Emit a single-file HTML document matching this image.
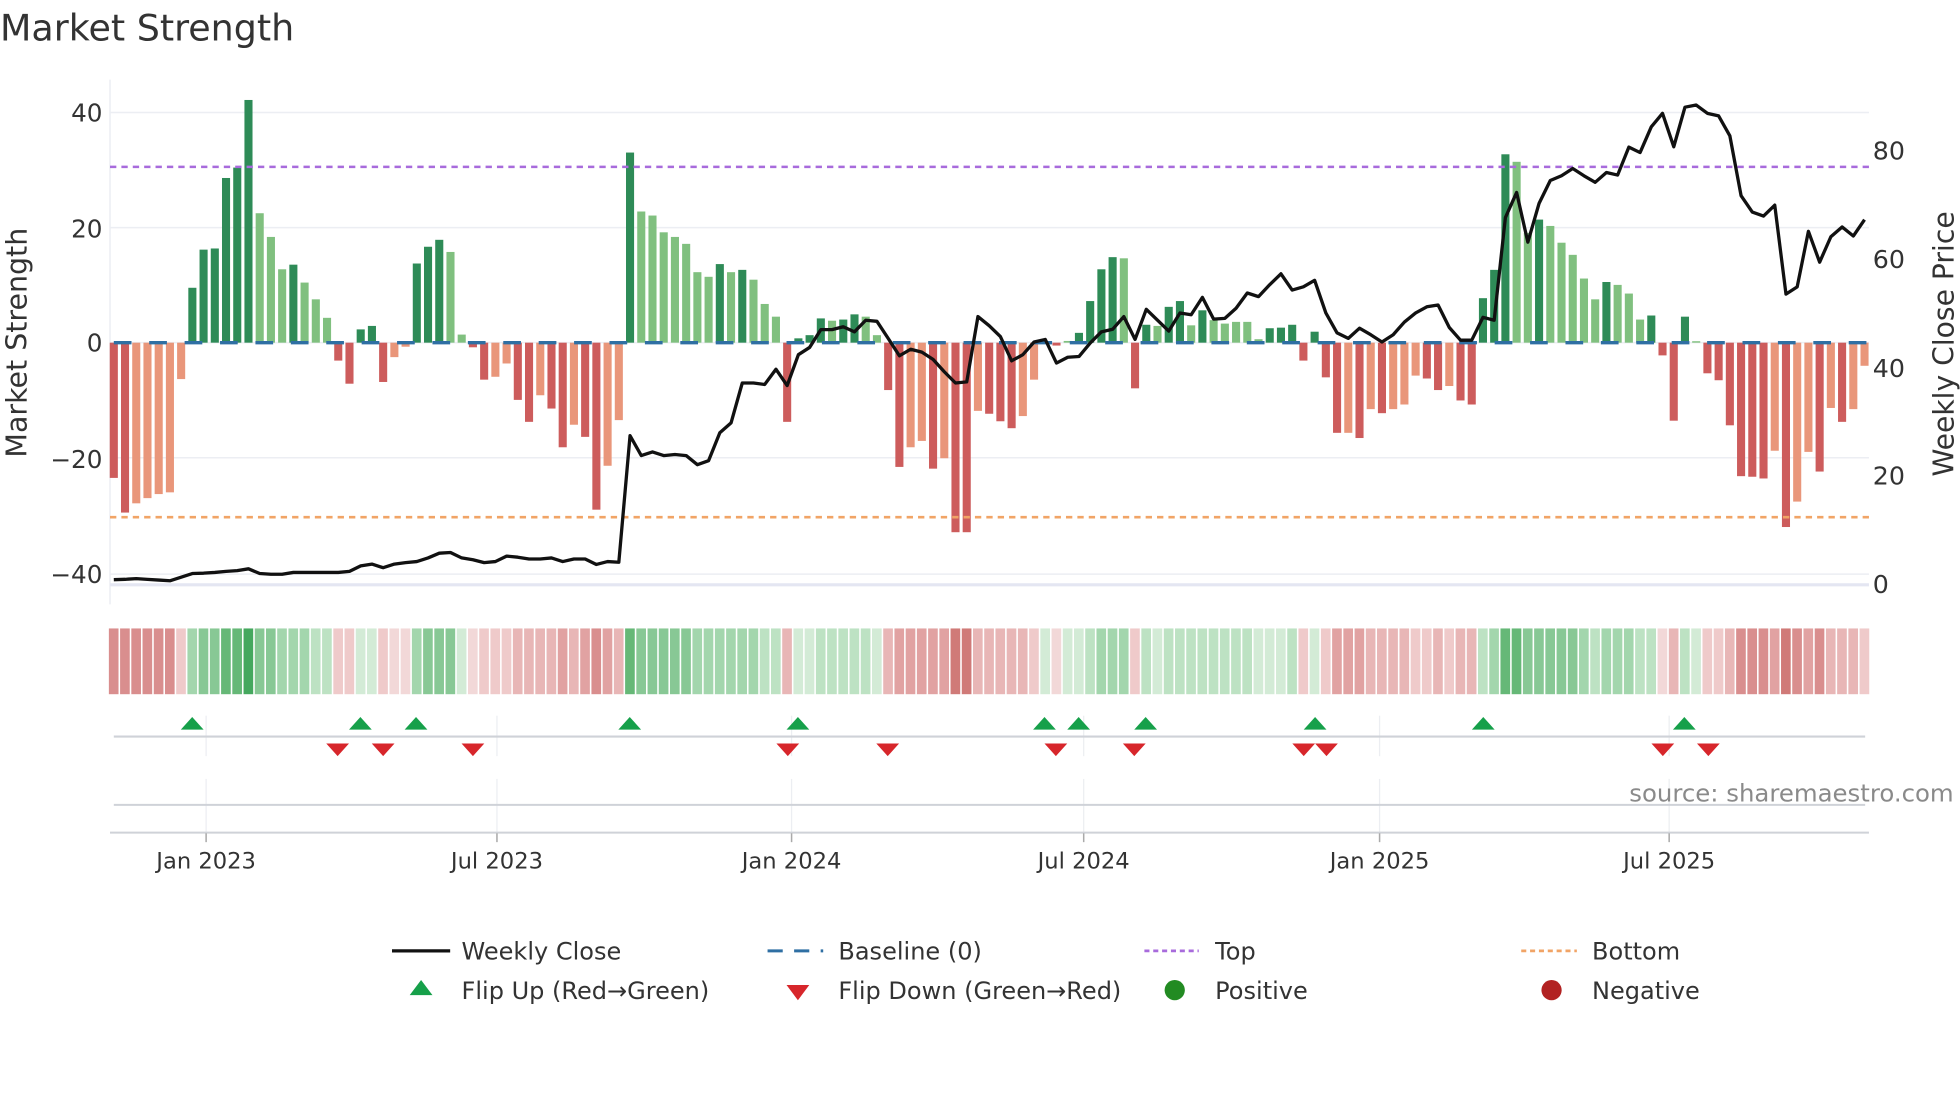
<!DOCTYPE html>
<html><head><meta charset="utf-8"><style>
html,body{margin:0;padding:0;background:#fff;}
svg{display:block;font-family:"DejaVu Sans","Liberation Sans",sans-serif;}
.G{fill:#2e8b57}.g{fill:#80c07f}.D{fill:#cd5c5c}.L{fill:#e9967a}
.g1{fill:#d3ebd6}.g2{fill:#bde2c3}.g3{fill:#a3d6ad}.g4{fill:#88c895}.g5{fill:#66b877}.g6{fill:#45a85e}
.r1{fill:#f2d8d8}.r2{fill:#efcaca}.r3{fill:#e8b6b6}.r4{fill:#e1a2a2}.r5{fill:#d98e8e}.r6{fill:#d07a78}
</style></head><body>
<svg width="1960" height="1102" viewBox="0 0 1550 871.5" preserveAspectRatio="none" xmlns="http://www.w3.org/2000/svg">
<text x="0" y="32" font-size="28.8" fill="#333">Market Strength</text>
<g stroke="#eceef3" stroke-width="1.2">
<line x1="87" y1="89" x2="1478" y2="89"/><line x1="87" y1="180" x2="1478" y2="180"/><line x1="87" y1="271" x2="1478" y2="271"/><line x1="87" y1="362" x2="1478" y2="362"/><line x1="87" y1="454" x2="1478" y2="454"/>
<line x1="87" y1="63" x2="87" y2="478"/>
</g>
<line x1="87" y1="462.5" x2="1478" y2="462.5" stroke="#e4e6f2" stroke-width="2.5"/>
<g transform="translate(90,271) scale(8.875,-4.57)">
<rect class="D" x="-0.36" y="-23.4" width="0.72" height="23.4"/>
<rect class="D" x="0.64" y="-29.4" width="0.72" height="29.4"/>
<rect class="L" x="1.64" y="-27.8" width="0.72" height="27.8"/>
<rect class="L" x="2.64" y="-26.9" width="0.72" height="26.9"/>
<rect class="L" x="3.64" y="-26.2" width="0.72" height="26.2"/>
<rect class="L" x="4.64" y="-25.9" width="0.72" height="25.9"/>
<rect class="L" x="5.64" y="-6.3" width="0.72" height="6.3"/>
<rect class="G" x="6.64" y="0" width="0.72" height="9.5"/>
<rect class="G" x="7.64" y="0" width="0.72" height="16.1"/>
<rect class="G" x="8.64" y="0" width="0.72" height="16.3"/>
<rect class="G" x="9.64" y="0" width="0.72" height="28.5"/>
<rect class="G" x="10.64" y="0" width="0.72" height="30.3"/>
<rect class="G" x="11.64" y="0" width="0.72" height="42"/>
<rect class="g" x="12.64" y="0" width="0.72" height="22.4"/>
<rect class="g" x="13.64" y="0" width="0.72" height="18.3"/>
<rect class="g" x="14.64" y="0" width="0.72" height="12.7"/>
<rect class="G" x="15.64" y="0" width="0.72" height="13.5"/>
<rect class="g" x="16.64" y="0" width="0.72" height="10.4"/>
<rect class="g" x="17.64" y="0" width="0.72" height="7.5"/>
<rect class="g" x="18.64" y="0" width="0.72" height="4.3"/>
<rect class="D" x="19.64" y="-3.1" width="0.72" height="3.1"/>
<rect class="D" x="20.64" y="-7.1" width="0.72" height="7.1"/>
<rect class="G" x="21.64" y="0" width="0.72" height="2.3"/>
<rect class="G" x="22.64" y="0" width="0.72" height="2.9"/>
<rect class="D" x="23.64" y="-6.8" width="0.72" height="6.8"/>
<rect class="L" x="24.64" y="-2.5" width="0.72" height="2.5"/>
<rect class="L" x="25.64" y="-0.7" width="0.72" height="0.7"/>
<rect class="G" x="26.64" y="0" width="0.72" height="13.7"/>
<rect class="G" x="27.64" y="0" width="0.72" height="16.6"/>
<rect class="G" x="28.64" y="0" width="0.72" height="17.8"/>
<rect class="g" x="29.64" y="0" width="0.72" height="15.7"/>
<rect class="g" x="30.64" y="0" width="0.72" height="1.4"/>
<rect class="D" x="31.64" y="-0.8" width="0.72" height="0.8"/>
<rect class="D" x="32.64" y="-6.4" width="0.72" height="6.4"/>
<rect class="L" x="33.64" y="-5.9" width="0.72" height="5.9"/>
<rect class="L" x="34.64" y="-3.6" width="0.72" height="3.6"/>
<rect class="D" x="35.64" y="-9.9" width="0.72" height="9.9"/>
<rect class="D" x="36.64" y="-13.7" width="0.72" height="13.7"/>
<rect class="L" x="37.64" y="-9.1" width="0.72" height="9.1"/>
<rect class="D" x="38.64" y="-11.4" width="0.72" height="11.4"/>
<rect class="D" x="39.64" y="-18.1" width="0.72" height="18.1"/>
<rect class="L" x="40.64" y="-14.2" width="0.72" height="14.2"/>
<rect class="D" x="41.64" y="-16.3" width="0.72" height="16.3"/>
<rect class="D" x="42.64" y="-28.9" width="0.72" height="28.9"/>
<rect class="L" x="43.64" y="-21.3" width="0.72" height="21.3"/>
<rect class="L" x="44.64" y="-13.4" width="0.72" height="13.4"/>
<rect class="G" x="45.64" y="0" width="0.72" height="32.9"/>
<rect class="g" x="46.64" y="0" width="0.72" height="22.7"/>
<rect class="g" x="47.64" y="0" width="0.72" height="22"/>
<rect class="g" x="48.64" y="0" width="0.72" height="19.1"/>
<rect class="g" x="49.64" y="0" width="0.72" height="18.3"/>
<rect class="g" x="50.64" y="0" width="0.72" height="17.1"/>
<rect class="g" x="51.64" y="0" width="0.72" height="12.2"/>
<rect class="g" x="52.64" y="0" width="0.72" height="11.4"/>
<rect class="G" x="53.64" y="0" width="0.72" height="13.6"/>
<rect class="g" x="54.64" y="0" width="0.72" height="12.2"/>
<rect class="G" x="55.64" y="0" width="0.72" height="12.6"/>
<rect class="g" x="56.64" y="0" width="0.72" height="10.9"/>
<rect class="g" x="57.64" y="0" width="0.72" height="6.7"/>
<rect class="g" x="58.64" y="0" width="0.72" height="4.5"/>
<rect class="D" x="59.64" y="-13.7" width="0.72" height="13.7"/>
<rect class="G" x="60.64" y="0" width="0.72" height="0.75"/>
<rect class="G" x="61.64" y="0" width="0.72" height="1.3"/>
<rect class="G" x="62.64" y="0" width="0.72" height="4.2"/>
<rect class="g" x="63.64" y="0" width="0.72" height="3.8"/>
<rect class="G" x="64.64" y="0" width="0.72" height="4.0"/>
<rect class="G" x="65.64" y="0" width="0.72" height="4.9"/>
<rect class="g" x="66.64" y="0" width="0.72" height="4.5"/>
<rect class="g" x="67.64" y="0" width="0.72" height="1.3"/>
<rect class="D" x="68.64" y="-8.2" width="0.72" height="8.2"/>
<rect class="D" x="69.64" y="-21.5" width="0.72" height="21.5"/>
<rect class="L" x="70.64" y="-18.1" width="0.72" height="18.1"/>
<rect class="L" x="71.64" y="-17" width="0.72" height="17"/>
<rect class="D" x="72.64" y="-21.8" width="0.72" height="21.8"/>
<rect class="L" x="73.64" y="-20" width="0.72" height="20"/>
<rect class="D" x="74.64" y="-32.8" width="0.72" height="32.8"/>
<rect class="D" x="75.64" y="-32.8" width="0.72" height="32.8"/>
<rect class="L" x="76.64" y="-11.8" width="0.72" height="11.8"/>
<rect class="D" x="77.64" y="-12.3" width="0.72" height="12.3"/>
<rect class="D" x="78.64" y="-13.6" width="0.72" height="13.6"/>
<rect class="D" x="79.64" y="-14.8" width="0.72" height="14.8"/>
<rect class="L" x="80.64" y="-12.7" width="0.72" height="12.7"/>
<rect class="L" x="81.64" y="-6.4" width="0.72" height="6.4"/>
<rect class="g" x="82.64" y="0" width="0.72" height="0.2"/>
<rect class="D" x="83.64" y="-0.5" width="0.72" height="0.5"/>
<rect class="g" x="84.64" y="0" width="0.72" height="0.3"/>
<rect class="G" x="85.64" y="0" width="0.72" height="1.7"/>
<rect class="G" x="86.64" y="0" width="0.72" height="7.2"/>
<rect class="G" x="87.64" y="0" width="0.72" height="12.7"/>
<rect class="G" x="88.64" y="0" width="0.72" height="14.8"/>
<rect class="g" x="89.64" y="0" width="0.72" height="14.6"/>
<rect class="D" x="90.64" y="-7.9" width="0.72" height="7.9"/>
<rect class="G" x="91.64" y="0" width="0.72" height="3.1"/>
<rect class="g" x="92.64" y="0" width="0.72" height="2.9"/>
<rect class="G" x="93.64" y="0" width="0.72" height="6.2"/>
<rect class="G" x="94.64" y="0" width="0.72" height="7.2"/>
<rect class="g" x="95.64" y="0" width="0.72" height="3.0"/>
<rect class="G" x="96.64" y="0" width="0.72" height="5.6"/>
<rect class="g" x="97.64" y="0" width="0.72" height="3.9"/>
<rect class="g" x="98.64" y="0" width="0.72" height="3.3"/>
<rect class="g" x="99.64" y="0" width="0.72" height="3.6"/>
<rect class="g" x="100.64" y="0" width="0.72" height="3.6"/>
<rect class="g" x="101.64" y="0" width="0.72" height="0.6"/>
<rect class="G" x="102.64" y="0" width="0.72" height="2.5"/>
<rect class="G" x="103.64" y="0" width="0.72" height="2.6"/>
<rect class="G" x="104.64" y="0" width="0.72" height="3.1"/>
<rect class="D" x="105.64" y="-3.1" width="0.72" height="3.1"/>
<rect class="G" x="106.64" y="0" width="0.72" height="1.9"/>
<rect class="D" x="107.64" y="-6.0" width="0.72" height="6.0"/>
<rect class="D" x="108.64" y="-15.6" width="0.72" height="15.6"/>
<rect class="L" x="109.64" y="-15.6" width="0.72" height="15.6"/>
<rect class="D" x="110.64" y="-16.5" width="0.72" height="16.5"/>
<rect class="L" x="111.64" y="-11.5" width="0.72" height="11.5"/>
<rect class="D" x="112.64" y="-12.2" width="0.72" height="12.2"/>
<rect class="L" x="113.64" y="-11.5" width="0.72" height="11.5"/>
<rect class="L" x="114.64" y="-10.7" width="0.72" height="10.7"/>
<rect class="L" x="115.64" y="-5.7" width="0.72" height="5.7"/>
<rect class="D" x="116.64" y="-6.2" width="0.72" height="6.2"/>
<rect class="D" x="117.64" y="-8.2" width="0.72" height="8.2"/>
<rect class="L" x="118.64" y="-7.5" width="0.72" height="7.5"/>
<rect class="D" x="119.64" y="-10.0" width="0.72" height="10.0"/>
<rect class="D" x="120.64" y="-10.7" width="0.72" height="10.7"/>
<rect class="G" x="121.64" y="0" width="0.72" height="7.7"/>
<rect class="G" x="122.64" y="0" width="0.72" height="12.6"/>
<rect class="G" x="123.64" y="0" width="0.72" height="32.6"/>
<rect class="g" x="124.64" y="0" width="0.72" height="31.3"/>
<rect class="g" x="125.64" y="0" width="0.72" height="19"/>
<rect class="G" x="126.64" y="0" width="0.72" height="21.3"/>
<rect class="g" x="127.64" y="0" width="0.72" height="20.2"/>
<rect class="g" x="128.64" y="0" width="0.72" height="17.3"/>
<rect class="g" x="129.64" y="0" width="0.72" height="15.2"/>
<rect class="g" x="130.64" y="0" width="0.72" height="11.1"/>
<rect class="g" x="131.64" y="0" width="0.72" height="7.5"/>
<rect class="G" x="132.64" y="0" width="0.72" height="10.5"/>
<rect class="g" x="133.64" y="0" width="0.72" height="10.0"/>
<rect class="g" x="134.64" y="0" width="0.72" height="8.5"/>
<rect class="g" x="135.64" y="0" width="0.72" height="4.0"/>
<rect class="G" x="136.64" y="0" width="0.72" height="4.7"/>
<rect class="D" x="137.64" y="-2.2" width="0.72" height="2.2"/>
<rect class="D" x="138.64" y="-13.5" width="0.72" height="13.5"/>
<rect class="G" x="139.64" y="0" width="0.72" height="4.5"/>
<rect class="g" x="140.64" y="0" width="0.72" height="0.25"/>
<rect class="D" x="141.64" y="-5.3" width="0.72" height="5.3"/>
<rect class="D" x="142.64" y="-6.5" width="0.72" height="6.5"/>
<rect class="D" x="143.64" y="-14.3" width="0.72" height="14.3"/>
<rect class="D" x="144.64" y="-23.1" width="0.72" height="23.1"/>
<rect class="D" x="145.64" y="-23.2" width="0.72" height="23.2"/>
<rect class="D" x="146.64" y="-23.5" width="0.72" height="23.5"/>
<rect class="L" x="147.64" y="-18.7" width="0.72" height="18.7"/>
<rect class="D" x="148.64" y="-31.9" width="0.72" height="31.9"/>
<rect class="L" x="149.64" y="-27.5" width="0.72" height="27.5"/>
<rect class="L" x="150.64" y="-18.9" width="0.72" height="18.9"/>
<rect class="D" x="151.64" y="-22.3" width="0.72" height="22.3"/>
<rect class="L" x="152.64" y="-11.3" width="0.72" height="11.3"/>
<rect class="D" x="153.64" y="-13.7" width="0.72" height="13.7"/>
<rect class="L" x="154.64" y="-11.5" width="0.72" height="11.5"/>
<rect class="L" x="155.64" y="-4.0" width="0.72" height="4.0"/>
</g>
<line x1="87" y1="271" x2="1478" y2="271" stroke="#2f6fa3" stroke-width="2.6" stroke-dasharray="14 14" stroke-dashoffset="-3"/>
<line x1="87" y1="132" x2="1478" y2="132" stroke="#a86bdc" stroke-width="2" stroke-dasharray="5 4"/>
<line x1="87" y1="409" x2="1478" y2="409" stroke="#f1a466" stroke-width="2" stroke-dasharray="5 4"/>
<g transform="translate(90,46.6) scale(8.875,0.287)">
<polyline fill="none" stroke="#111" stroke-width="3.3" stroke-linejoin="round" vector-effect="non-scaling-stroke" points="0,1435 1,1434 2,1432 3,1434 4,1436 5,1438 6,1428 7,1418 8,1417 9,1415 10,1412 11,1410 12,1405 13,1418 14,1420 15,1420 16,1415 17,1415 18,1415 19,1415 20,1415 21,1412 22,1397 23,1392 24,1402 25,1392 26,1388 27,1385 28,1375 29,1362 30,1360 31,1375 32,1380 33,1388 34,1385 35,1370 36,1373 37,1378 38,1378 39,1375 40,1385 41,1378 42,1378 43,1393 44,1385 45,1387 46,1038 47,1093 48,1083 49,1093 50,1090 51,1093 52,1118 53,1107 54,1030 55,1003 56,893 57,893 58,897 59,855 60,900 61,815 62,795 63,746 64,746 65,738 66,752 67,720 68,723 69,770 70,818 71,800 72,808 73,828 74,862 75,893 76,890 77,710 78,735 79,765 80,832 81,815 82,780 83,773 84,838 85,822 86,820 87,783 88,752 89,745 90,710 91,773 92,690 93,720 94,750 95,700 96,705 97,657 98,717 99,715 100,687 101,645 102,655 103,622 104,592 105,637 106,628 107,610 108,700 109,755 110,770 111,742 112,760 113,780 114,760 115,725 116,700 117,683 118,678 119,740 120,775 121,775 122,712 123,720 124,437 125,368 126,505 127,398 128,335 129,322 130,302 131,322 132,340 133,313 134,320 135,243 136,258 137,187 138,150 139,242 140,133 141,127 142,150 143,157 144,212 145,377 146,422 147,433 148,403 149,648 150,628 151,475 152,560 153,490 154,463 155,488 156,443"/>
</g>
<g font-size="19.5" fill="#333" text-anchor="end">
<text x="81" y="96">40</text><text x="81" y="188">20</text><text x="81" y="278">0</text><text x="81" y="370">−20</text><text x="81" y="461">−40</text>
</g>
<g font-size="20" fill="#333">
<text x="1481" y="126">80</text><text x="1481" y="212">60</text><text x="1481" y="298">40</text><text x="1481" y="383">20</text><text x="1481" y="469">0</text>
</g>
<text transform="translate(21,271) rotate(-90)" font-size="22.5" fill="#333" text-anchor="middle">Market Strength</text>
<text transform="translate(1545,272) rotate(-90)" font-size="22.3" fill="#333" text-anchor="middle">Weekly Close Price</text>
<g transform="translate(90,497) scale(8.875,1)">
<rect class="r5" x="-0.44" y="0" width="0.86" height="52"/><rect class="r5" x="0.56" y="0" width="0.86" height="52"/><rect class="r5" x="1.56" y="0" width="0.86" height="52"/><rect class="r5" x="2.56" y="0" width="0.86" height="52"/><rect class="r5" x="3.56" y="0" width="0.86" height="52"/><rect class="r5" x="4.56" y="0" width="0.86" height="52"/><rect class="r2" x="5.56" y="0" width="0.86" height="52"/><rect class="g3" x="6.56" y="0" width="0.86" height="52"/><rect class="g4" x="7.56" y="0" width="0.86" height="52"/><rect class="g4" x="8.56" y="0" width="0.86" height="52"/>
<rect class="g5" x="9.56" y="0" width="0.86" height="52"/><rect class="g5" x="10.56" y="0" width="0.86" height="52"/><rect class="g6" x="11.56" y="0" width="0.86" height="52"/><rect class="g4" x="12.56" y="0" width="0.86" height="52"/><rect class="g4" x="13.56" y="0" width="0.86" height="52"/><rect class="g3" x="14.56" y="0" width="0.86" height="52"/><rect class="g3" x="15.56" y="0" width="0.86" height="52"/><rect class="g3" x="16.56" y="0" width="0.86" height="52"/><rect class="g2" x="17.56" y="0" width="0.86" height="52"/><rect class="g2" x="18.56" y="0" width="0.86" height="52"/>
<rect class="r2" x="19.56" y="0" width="0.86" height="52"/><rect class="r2" x="20.56" y="0" width="0.86" height="52"/><rect class="g1" x="21.56" y="0" width="0.86" height="52"/><rect class="g1" x="22.56" y="0" width="0.86" height="52"/><rect class="r2" x="23.56" y="0" width="0.86" height="52"/><rect class="r1" x="24.56" y="0" width="0.86" height="52"/><rect class="r1" x="25.56" y="0" width="0.86" height="52"/><rect class="g3" x="26.56" y="0" width="0.86" height="52"/><rect class="g4" x="27.56" y="0" width="0.86" height="52"/><rect class="g4" x="28.56" y="0" width="0.86" height="52"/>
<rect class="g4" x="29.56" y="0" width="0.86" height="52"/><rect class="g1" x="30.56" y="0" width="0.86" height="52"/><rect class="r1" x="31.56" y="0" width="0.86" height="52"/><rect class="r2" x="32.56" y="0" width="0.86" height="52"/><rect class="r2" x="33.56" y="0" width="0.86" height="52"/><rect class="r2" x="34.56" y="0" width="0.86" height="52"/><rect class="r3" x="35.56" y="0" width="0.86" height="52"/><rect class="r3" x="36.56" y="0" width="0.86" height="52"/><rect class="r3" x="37.56" y="0" width="0.86" height="52"/><rect class="r3" x="38.56" y="0" width="0.86" height="52"/>
<rect class="r4" x="39.56" y="0" width="0.86" height="52"/><rect class="r3" x="40.56" y="0" width="0.86" height="52"/><rect class="r4" x="41.56" y="0" width="0.86" height="52"/><rect class="r5" x="42.56" y="0" width="0.86" height="52"/><rect class="r4" x="43.56" y="0" width="0.86" height="52"/><rect class="r3" x="44.56" y="0" width="0.86" height="52"/><rect class="g5" x="45.56" y="0" width="0.86" height="52"/><rect class="g4" x="46.56" y="0" width="0.86" height="52"/><rect class="g4" x="47.56" y="0" width="0.86" height="52"/><rect class="g4" x="48.56" y="0" width="0.86" height="52"/>
<rect class="g4" x="49.56" y="0" width="0.86" height="52"/><rect class="g4" x="50.56" y="0" width="0.86" height="52"/><rect class="g3" x="51.56" y="0" width="0.86" height="52"/><rect class="g3" x="52.56" y="0" width="0.86" height="52"/><rect class="g3" x="53.56" y="0" width="0.86" height="52"/><rect class="g3" x="54.56" y="0" width="0.86" height="52"/><rect class="g3" x="55.56" y="0" width="0.86" height="52"/><rect class="g3" x="56.56" y="0" width="0.86" height="52"/><rect class="g2" x="57.56" y="0" width="0.86" height="52"/><rect class="g2" x="58.56" y="0" width="0.86" height="52"/>
<rect class="r3" x="59.56" y="0" width="0.86" height="52"/><rect class="g1" x="60.56" y="0" width="0.86" height="52"/><rect class="g1" x="61.56" y="0" width="0.86" height="52"/><rect class="g2" x="62.56" y="0" width="0.86" height="52"/><rect class="g2" x="63.56" y="0" width="0.86" height="52"/><rect class="g2" x="64.56" y="0" width="0.86" height="52"/><rect class="g2" x="65.56" y="0" width="0.86" height="52"/><rect class="g2" x="66.56" y="0" width="0.86" height="52"/><rect class="g1" x="67.56" y="0" width="0.86" height="52"/><rect class="r3" x="68.56" y="0" width="0.86" height="52"/>
<rect class="r4" x="69.56" y="0" width="0.86" height="52"/><rect class="r4" x="70.56" y="0" width="0.86" height="52"/><rect class="r4" x="71.56" y="0" width="0.86" height="52"/><rect class="r4" x="72.56" y="0" width="0.86" height="52"/><rect class="r4" x="73.56" y="0" width="0.86" height="52"/><rect class="r6" x="74.56" y="0" width="0.86" height="52"/><rect class="r6" x="75.56" y="0" width="0.86" height="52"/><rect class="r3" x="76.56" y="0" width="0.86" height="52"/><rect class="r3" x="77.56" y="0" width="0.86" height="52"/><rect class="r3" x="78.56" y="0" width="0.86" height="52"/>
<rect class="r3" x="79.56" y="0" width="0.86" height="52"/><rect class="r3" x="80.56" y="0" width="0.86" height="52"/><rect class="r2" x="81.56" y="0" width="0.86" height="52"/><rect class="g1" x="82.56" y="0" width="0.86" height="52"/><rect class="r1" x="83.56" y="0" width="0.86" height="52"/><rect class="g1" x="84.56" y="0" width="0.86" height="52"/><rect class="g1" x="85.56" y="0" width="0.86" height="52"/><rect class="g2" x="86.56" y="0" width="0.86" height="52"/><rect class="g3" x="87.56" y="0" width="0.86" height="52"/><rect class="g3" x="88.56" y="0" width="0.86" height="52"/>
<rect class="g3" x="89.56" y="0" width="0.86" height="52"/><rect class="r2" x="90.56" y="0" width="0.86" height="52"/><rect class="g2" x="91.56" y="0" width="0.86" height="52"/><rect class="g1" x="92.56" y="0" width="0.86" height="52"/><rect class="g2" x="93.56" y="0" width="0.86" height="52"/><rect class="g2" x="94.56" y="0" width="0.86" height="52"/><rect class="g2" x="95.56" y="0" width="0.86" height="52"/><rect class="g2" x="96.56" y="0" width="0.86" height="52"/><rect class="g2" x="97.56" y="0" width="0.86" height="52"/><rect class="g2" x="98.56" y="0" width="0.86" height="52"/>
<rect class="g2" x="99.56" y="0" width="0.86" height="52"/><rect class="g2" x="100.56" y="0" width="0.86" height="52"/><rect class="g1" x="101.56" y="0" width="0.86" height="52"/><rect class="g1" x="102.56" y="0" width="0.86" height="52"/><rect class="g1" x="103.56" y="0" width="0.86" height="52"/><rect class="g2" x="104.56" y="0" width="0.86" height="52"/><rect class="r2" x="105.56" y="0" width="0.86" height="52"/><rect class="g1" x="106.56" y="0" width="0.86" height="52"/><rect class="r2" x="107.56" y="0" width="0.86" height="52"/><rect class="r4" x="108.56" y="0" width="0.86" height="52"/>
<rect class="r4" x="109.56" y="0" width="0.86" height="52"/><rect class="r4" x="110.56" y="0" width="0.86" height="52"/><rect class="r3" x="111.56" y="0" width="0.86" height="52"/><rect class="r3" x="112.56" y="0" width="0.86" height="52"/><rect class="r3" x="113.56" y="0" width="0.86" height="52"/><rect class="r3" x="114.56" y="0" width="0.86" height="52"/><rect class="r2" x="115.56" y="0" width="0.86" height="52"/><rect class="r2" x="116.56" y="0" width="0.86" height="52"/><rect class="r3" x="117.56" y="0" width="0.86" height="52"/><rect class="r2" x="118.56" y="0" width="0.86" height="52"/>
<rect class="r3" x="119.56" y="0" width="0.86" height="52"/><rect class="r3" x="120.56" y="0" width="0.86" height="52"/><rect class="g2" x="121.56" y="0" width="0.86" height="52"/><rect class="g3" x="122.56" y="0" width="0.86" height="52"/><rect class="g5" x="123.56" y="0" width="0.86" height="52"/><rect class="g5" x="124.56" y="0" width="0.86" height="52"/><rect class="g4" x="125.56" y="0" width="0.86" height="52"/><rect class="g4" x="126.56" y="0" width="0.86" height="52"/><rect class="g4" x="127.56" y="0" width="0.86" height="52"/><rect class="g4" x="128.56" y="0" width="0.86" height="52"/>
<rect class="g4" x="129.56" y="0" width="0.86" height="52"/><rect class="g3" x="130.56" y="0" width="0.86" height="52"/><rect class="g2" x="131.56" y="0" width="0.86" height="52"/><rect class="g3" x="132.56" y="0" width="0.86" height="52"/><rect class="g3" x="133.56" y="0" width="0.86" height="52"/><rect class="g3" x="134.56" y="0" width="0.86" height="52"/><rect class="g2" x="135.56" y="0" width="0.86" height="52"/><rect class="g2" x="136.56" y="0" width="0.86" height="52"/><rect class="r1" x="137.56" y="0" width="0.86" height="52"/><rect class="r3" x="138.56" y="0" width="0.86" height="52"/>
<rect class="g2" x="139.56" y="0" width="0.86" height="52"/><rect class="g1" x="140.56" y="0" width="0.86" height="52"/><rect class="r2" x="141.56" y="0" width="0.86" height="52"/><rect class="r2" x="142.56" y="0" width="0.86" height="52"/><rect class="r3" x="143.56" y="0" width="0.86" height="52"/><rect class="r5" x="144.56" y="0" width="0.86" height="52"/><rect class="r5" x="145.56" y="0" width="0.86" height="52"/><rect class="r5" x="146.56" y="0" width="0.86" height="52"/><rect class="r4" x="147.56" y="0" width="0.86" height="52"/><rect class="r6" x="148.56" y="0" width="0.86" height="52"/>
<rect class="r5" x="149.56" y="0" width="0.86" height="52"/><rect class="r4" x="150.56" y="0" width="0.86" height="52"/><rect class="r5" x="151.56" y="0" width="0.86" height="52"/><rect class="r3" x="152.56" y="0" width="0.86" height="52"/><rect class="r3" x="153.56" y="0" width="0.86" height="52"/><rect class="r3" x="154.56" y="0" width="0.86" height="52"/><rect class="r2" x="155.56" y="0" width="0.86" height="52"/>
</g>
<g stroke="#eceef2" stroke-width="1">
<line x1="163" y1="566" x2="163" y2="598"/><line x1="393" y1="566" x2="393" y2="598"/><line x1="626" y1="566" x2="626" y2="598"/><line x1="857" y1="566" x2="857" y2="598"/><line x1="1091" y1="566" x2="1091" y2="598"/><line x1="1320" y1="566" x2="1320" y2="598"/>
<line x1="163" y1="616" x2="163" y2="658"/><line x1="393" y1="616" x2="393" y2="658"/><line x1="626" y1="616" x2="626" y2="658"/><line x1="857" y1="616" x2="857" y2="658"/><line x1="1091" y1="616" x2="1091" y2="658"/><line x1="1320" y1="616" x2="1320" y2="658"/>
</g>
<line x1="90" y1="582.5" x2="1475" y2="582.5" stroke="#cfd2d8" stroke-width="1.6"/>
<line x1="90" y1="636.5" x2="1475" y2="636.5" stroke="#cfd2d8" stroke-width="1.6"/>
<line x1="87" y1="658.5" x2="1478" y2="658.5" stroke="#cfd2d8" stroke-width="1.6"/>
<g stroke="#aaa" stroke-width="1.2">
<line x1="163" y1="659" x2="163" y2="666"/><line x1="393" y1="659" x2="393" y2="666"/><line x1="626" y1="659" x2="626" y2="666"/><line x1="857" y1="659" x2="857" y2="666"/><line x1="1091" y1="659" x2="1091" y2="666"/><line x1="1320" y1="659" x2="1320" y2="666"/>
</g>
<g fill="#16a04a">
<polygon points="143,577 161,577 152,567"/><polygon points="276,577 294,577 285,567"/><polygon points="320,577 338,577 329,567"/><polygon points="489,577 507,577 498,567"/><polygon points="622,577 640,577 631,567"/><polygon points="817,577 835,577 826,567"/><polygon points="844,577 862,577 853,567"/><polygon points="897,577 915,577 906,567"/><polygon points="1031,577 1049,577 1040,567"/><polygon points="1164,577 1182,577 1173,567"/><polygon points="1323,577 1341,577 1332,567"/>
</g>
<g fill="#d7262b">
<polygon points="258,588 276,588 267,598"/><polygon points="294,588 312,588 303,598"/><polygon points="365,588 383,588 374,598"/><polygon points="614,588 632,588 623,598"/><polygon points="693,588 711,588 702,598"/><polygon points="826,588 844,588 835,598"/><polygon points="888,588 906,588 897,598"/><polygon points="1022,588 1040,588 1031,598"/><polygon points="1040,588 1058,588 1049,598"/><polygon points="1306,588 1324,588 1315,598"/><polygon points="1342,588 1360,588 1351,598"/>
</g>
<text x="1545" y="634" font-size="19.3" fill="#8a8a8a" text-anchor="end">source: sharemaestro.com</text>
<g font-size="17.9" fill="#333" text-anchor="middle">
<text x="163" y="687">Jan 2023</text><text x="393" y="687">Jul 2023</text><text x="626" y="687">Jan 2024</text><text x="857" y="687">Jul 2024</text><text x="1091" y="687">Jan 2025</text><text x="1320" y="687">Jul 2025</text>
</g>
<line x1="310" y1="752" x2="356" y2="752" stroke="#111" stroke-width="2.6"/>
<line x1="607" y1="752" x2="651" y2="752" stroke="#2f6fa3" stroke-width="2.4" stroke-dasharray="12 9"/>
<line x1="905" y1="752" x2="948" y2="752" stroke="#a86bdc" stroke-width="2.2" stroke-dasharray="4 3"/>
<line x1="1203" y1="752" x2="1247" y2="752" stroke="#f1a466" stroke-width="2.2" stroke-dasharray="4 3"/>
<polygon points="324,787 342,787 333,775" fill="#16a04a"/>
<polygon points="622,779 640,779 631,791" fill="#d7262b"/>
<circle cx="929" cy="783" r="8" fill="#228b22"/>
<circle cx="1227" cy="783" r="8" fill="#b22222"/>
<g font-size="19" fill="#333">
<text x="365" y="759">Weekly Close</text><text x="663" y="759">Baseline (0)</text><text x="961" y="759">Top</text><text x="1259" y="759">Bottom</text>
<text x="365" y="790">Flip Up (Red→Green)</text><text x="663" y="790">Flip Down (Green→Red)</text><text x="961" y="790">Positive</text><text x="1259" y="790">Negative</text>
</g>
</svg>
</body></html>
